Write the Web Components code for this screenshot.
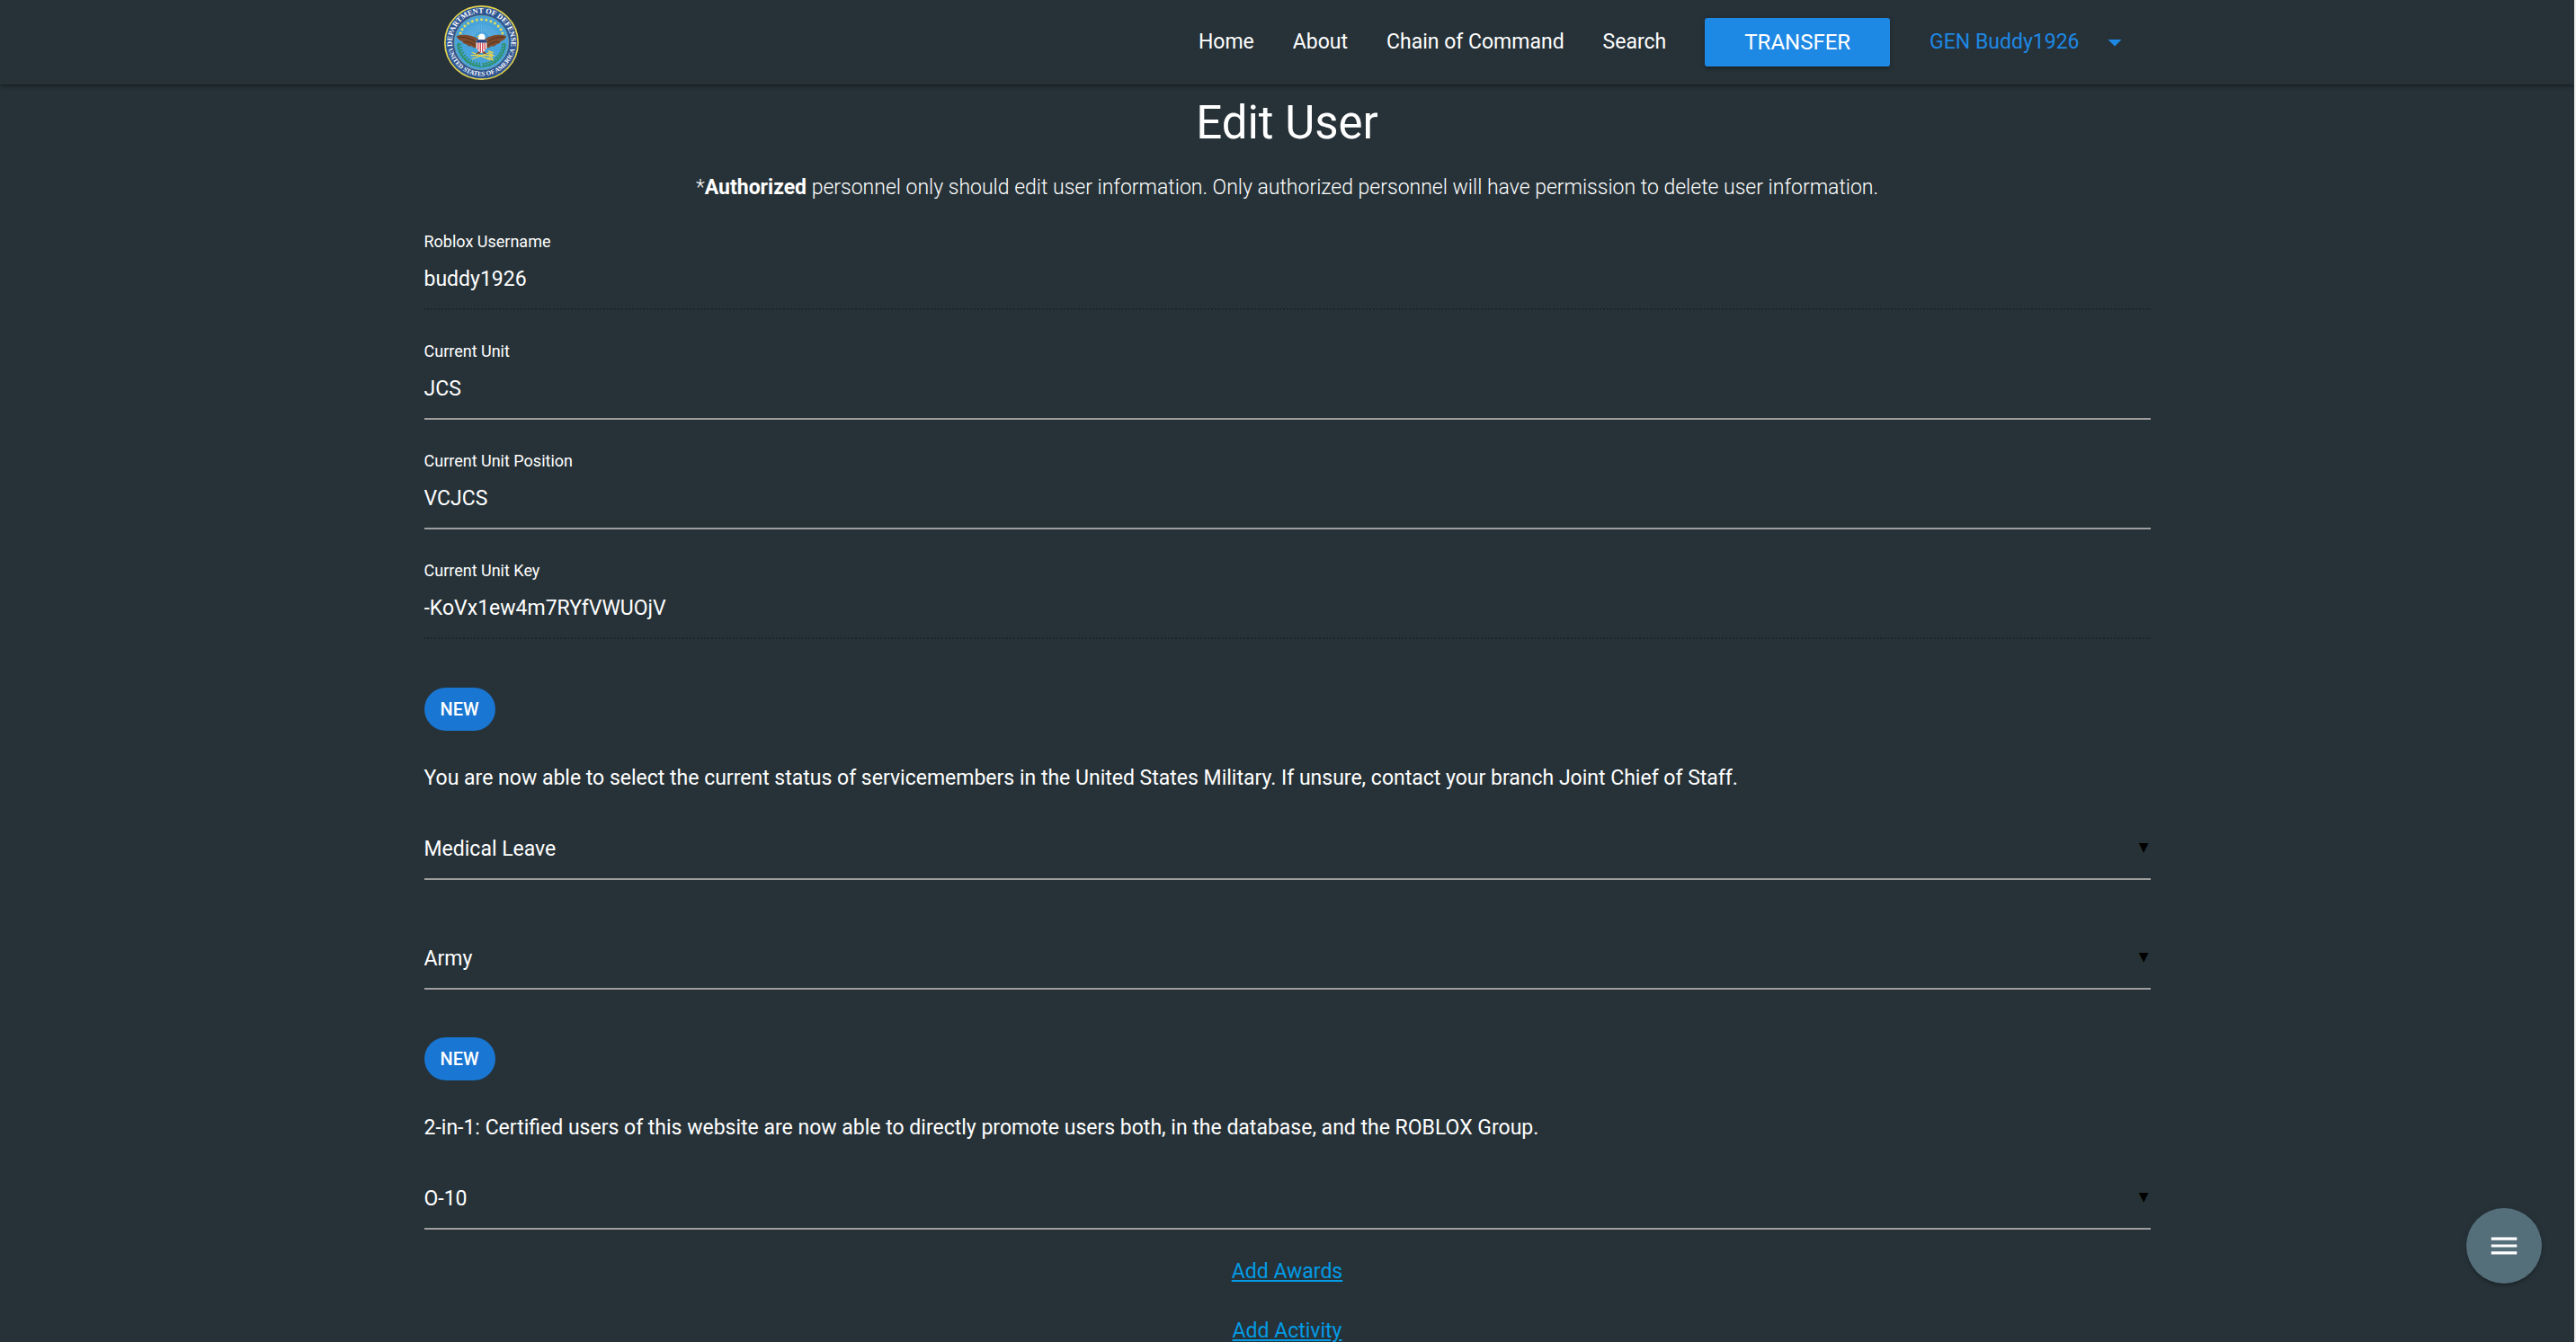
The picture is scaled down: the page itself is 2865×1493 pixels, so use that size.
<!DOCTYPE html>
<html lang="en">
<head>
<meta charset="utf-8">
<title>Edit User</title>
<style>
html, body { margin: 0; height: 100%; background: #263238; }
body {
  --bg: #263238; --blue: #1e88e5; --badge: #1976d2; --link: #039be5; --line: #9e9e9e;
  --text: 23px; --leading: 34px;
  font: 400 var(--text)/var(--leading) Roboto, "Open Sans", sans-serif; color: #fff;
}
b { font-weight: 700; }
</style>
</head>
<body>
<app-shell>
  <site-nav slot="nav">
    <defense-seal slot="brand"></defense-seal>
    <nav-link href="#home">Home</nav-link>
    <nav-link href="#about">About</nav-link>
    <nav-link href="#chain">Chain of Command</nav-link>
    <nav-link href="#search">Search</nav-link>
    <nav-button>TRANSFER</nav-button>
    <user-menu>GEN Buddy1926</user-menu>
  </site-nav>
  <page-heading>
    Edit User
    <span slot="note">*<b>Authorized</b> personnel only should edit user information. Only authorized personnel will have permission to delete user information.</span>
  </page-heading>
  <field-group>
    <text-field label="Roblox Username" value="buddy1926" disabled></text-field>
    <text-field label="Current Unit" value="JCS"></text-field>
    <text-field label="Current Unit Position" value="VCJCS"></text-field>
    <text-field label="Current Unit Key" value="-KoVx1ew4m7RYfVWUOjV" disabled></text-field>
  </field-group>
  <feature-note>You are now able to select the current status of servicemembers in the United States Military. If unsure, contact your branch Joint Chief of Staff.</feature-note>
  <select-group>
    <select-field label="Status" options="Medical Leave|Active Duty|Reserve|Retired"></select-field>
    <select-field label="Branch" options="Army|Navy|Air Force|Marine Corps"></select-field>
  </select-group>
  <feature-note>2-in-1: Certified users of this website are now able to directly promote users both, in the database, and the ROBLOX Group.</feature-note>
  <select-group>
    <select-field label="Rank" options="O-10|O-9|O-8|O-7"></select-field>
  </select-group>
  <link-list>
    <action-link href="#awards">Add Awards</action-link>
    <action-link href="#activity">Add Activity</action-link>
  </link-list>
  <floating-menu slot="fab"></floating-menu>
</app-shell>

<script>
const define = (name, render) => customElements.define(name, class extends HTMLElement {
  connectedCallback() {
    if (this.shadowRoot) return;
    this.attachShadow({ mode: 'open' }).innerHTML = render(this);
  }
});

define('app-shell', () => `
<style>
:host { display: flex; flex-direction: column; box-sizing: border-box; height: 100vh; overflow-y: auto; scrollbar-width: none; background: var(--bg); border-right: 2px solid #f1f1f1; }
main { width: 70%; max-width: 1920px; margin: 0 auto; flex: none; }
</style>
<slot name="nav"></slot>
<main><slot></slot></main>
<slot name="fab"></slot>`);

define('site-nav', () => `
<style>
:host { display: block; flex: none; background: var(--bg); box-shadow: 0 3px 3px rgba(0,0,0,.14), 0 1px 7px rgba(0,0,0,.12), 0 3px 1px -2px rgba(0,0,0,.2); }
nav { width: 70%; max-width: 1920px; height: 94px; margin: 0 auto; display: flex; align-items: center; justify-content: space-between; }
.brand { padding-left: 22px; display: flex; }
.links { display: flex; align-items: center; }
</style>
<nav><div class="brand"><slot name="brand"></slot></div><div class="links"><slot></slot></div></nav>`);

define('nav-link', el => `
<style>
:host { display: block; }
a { display: block; padding: 0 21px 0 22px; color: inherit; text-decoration: none; }
</style>
<a href="${el.getAttribute('href')}"><slot></slot></a>`);

define('nav-button', () => `
<style>
:host { display: block; padding: 0 22px; }
button { font: inherit; font-size: 24px; color: #fff; background: var(--blue); border: 0; border-radius: 3px; height: 54px; padding: 0 44px; margin: 0; display: block;
  box-shadow: 0 3px 3px rgba(0,0,0,.14), 0 1px 7px rgba(0,0,0,.12), 0 3px 1px -2px rgba(0,0,0,.2); }
</style>
<button type="button"><slot></slot></button>`);

define('user-menu', () => `
<style>
:host { display: block; }
button { font: inherit; color: var(--blue); background: none; border: 0; margin: 0; padding: 0 22px; display: flex; align-items: center; gap: 21px; }
svg { width: 36px; height: 36px; display: block; }
</style>
<button type="button" aria-haspopup="true"><slot></slot><svg viewBox="0 0 24 24" aria-hidden="true"><path d="M7 10l5 5 5-5z" fill="currentColor"/></svg></button>`);

define('defense-seal', () => {
  const stars = Array.from({ length: 13 }, (_, i) => {
    const a = (-166 + i * 12.7) * Math.PI / 180;
    const cx = 100 + 58 * Math.cos(a), cy = 86 + 48 * Math.sin(a);
    const p = Array.from({ length: 10 }, (_, k) => {
      const r = k % 2 ? 2.4 : 5.4, t = -Math.PI / 2 + k * Math.PI / 5;
      return `${(cx + r * Math.cos(t)).toFixed(1)},${(cy + r * Math.sin(t)).toFixed(1)}`;
    }).join(' ');
    return `<polygon points="${p}" fill="#f5e04a"/>`;
  }).join('');
  const rays = Array.from({ length: 19 }, (_, i) => {
    const a = (-171 + i * 9) * Math.PI / 180;
    return `<line x1="${(100 + 20 * Math.cos(a)).toFixed(1)}" y1="${(88 + 18 * Math.sin(a)).toFixed(1)}" x2="${(100 + 47 * Math.cos(a)).toFixed(1)}" y2="${(88 + 37 * Math.sin(a)).toFixed(1)}"/>`;
  }).join('');
  const leaves = Array.from({ length: 11 }, (_, i) => {
    const d = 5 + i * 8;
    return [d, 180 - d].map((g, s) => {
      const a = g * Math.PI / 180, x = 100 + 63 * Math.cos(a), y = 100 + 63 * Math.sin(a);
      const rot = g + 90 + (s ? 25 : -25);
      return `<ellipse cx="${x.toFixed(1)}" cy="${y.toFixed(1)}" rx="6" ry="2.6" transform="rotate(${rot} ${x.toFixed(1)} ${y.toFixed(1)})"/>
        <ellipse cx="${(x * .9 + 10).toFixed(1)}" cy="${(y * .9 + 10).toFixed(1)}" rx="4" ry="2" transform="rotate(${rot + 50} ${(x * .9 + 10).toFixed(1)} ${(y * .9 + 10).toFixed(1)})"/>`;
    }).join('');
  }).join('');
  return `
<style>
:host { display: block; }
svg { display: block; width: 83px; height: 83px; }
text { font: 700 20px "Liberation Serif", serif; fill: #fff; }
.small { font-size: 17px; }
</style>
<svg viewBox="0 0 200 200" role="img" aria-label="Seal">
<defs><path id="top" d="M22 112 A79 79 0 1 1 178 112"/><path id="bottom" d="M10 108 A90.500 90.500 0 0 0 190 108"/></defs>
<circle cx="100" cy="100" r="98" fill="#2e5591" stroke="#e3d34e" stroke-width="4"/>
<circle cx="100" cy="100" r="73" fill="#47a3dc" stroke="#a9b56e" stroke-width="1"/>
<g stroke="#8cc6e6" stroke-width="1">${rays}</g>
${stars}
<g fill="#2f8f63">${leaves}</g>
<g stroke="#e8d44d" stroke-width="3" fill="none"><path d="M72 134 L126 134 M74 144 L124 126 M74 126 L124 146"/><path d="M118 122 l12 4 -8 8 M120 130 l12 4 -12 5 M116 140 l14 6 -4 -12"/></g>
<path d="M90 90 C74 78 52 76 33 82 C36 92 44 94 48 96 C49 102 55 104 60 104 C63 110 70 110 74 109 C78 115 86 115 92 112 L92 124 L84 132 L100 128 L116 132 L108 124 L108 112 C114 115 122 115 126 109 C130 110 137 110 140 104 C145 104 151 102 152 96 C156 94 164 92 167 82 C148 76 126 78 110 90 Z" fill="#7d4b2d"/>
<path d="M38 85 C55 84 72 88 86 100 M162 85 C145 84 128 88 114 100 M54 97 C66 97 76 102 84 108 M146 97 C134 97 124 102 116 108" stroke="#4a2b1b" stroke-width="2" fill="none"/>
<path d="M92 92 C89 80 95 76 102 76 C109 77 111 83 109 92 Z" fill="#fff"/><path d="M94 80 L86 84 L94 85Z" fill="#f0cf42"/>
<path d="M86 92 H114 V112 Q112 121 100 128 Q88 121 86 112Z" fill="#fff"/>
<path d="M91 100V119M97 100V125M103 100V125M109 100V119" stroke="#cf3947" stroke-width="3"/>
<path d="M86 92H114V100H86Z" fill="#28437f"/>
<text><textPath href="#top" startOffset="50%" text-anchor="middle">DEPARTMENT OF DEFENSE</textPath></text>
<text class="small"><textPath href="#bottom" startOffset="50%" text-anchor="middle">UNITED STATES OF AMERICA</textPath></text>
</svg>`;
});

define('page-heading', () => `
<style>
:host { display: block; text-align: center; padding: 15px 0 33px; }
h1 { font-size: 51px; line-height: 56px; font-weight: 400; margin: 0 0 27px; }
p { margin: 0; font-weight: 300; }
</style>
<h1><slot></slot></h1><p><slot name="note"></slot></p>`);

define('field-group', () => `
<style>:host { display: flex; flex-direction: column; gap: 36px; padding-bottom: 54px; }</style><slot></slot>`);

define('select-group', () => `
<style>:host { display: flex; flex-direction: column; gap: 56px; padding-bottom: 53px; }
:host(:last-of-type) { padding-bottom: 30px; }</style><slot></slot>`);

define('text-field', el => `
<style>
:host { display: flex; flex-direction: column; }
label { font-size: 18px; line-height: 20px; }
input { font: inherit; color: #fff; -webkit-text-fill-color: #fff; opacity: 1; background: none; box-sizing: border-box; width: 100%; height: 66px; margin: 0; padding: 0 0 1px; border: 0; border-bottom: 2px solid var(--line); border-radius: 0; outline: 0; }
input:disabled { border-bottom: 2px dotted rgba(0,0,0,.26); }
</style>
<label for="i">${el.getAttribute('label')}</label>
<input id="i" type="text" value="${el.getAttribute('value')}" ${el.hasAttribute('disabled') ? 'disabled' : ''}>`);

define('select-field', el => `
<style>
:host { display: grid; align-items: center; border-bottom: 2px solid var(--line); }
select { grid-area: 1 / 1; appearance: none; font: inherit; color: #fff; background: none; width: 100%; height: 64px; margin: 0; padding: 0 0 1px; border: 0; border-radius: 0; outline: 0; }
option { color: #263238; }
.caret { grid-area: 1 / 1; justify-self: end; padding: 0 2px 5px 0; font: 14px/15px "DejaVu Sans", sans-serif; color: #000; pointer-events: none; }
</style>
<select aria-label="${el.getAttribute('label')}">${el.getAttribute('options').split('|').map(o => `<option>${o}</option>`).join('')}</select>
<span class="caret" aria-hidden="true">▼</span>`);

define('feature-note', () => `
<style>
:host { display: flex; flex-direction: column; align-items: flex-start; gap: 36px; padding-bottom: 30px; }
.badge { background: var(--badge); border-radius: 24px; font-size: 20px; font-weight: 500; line-height: 48px; padding: 0 18px; }
p { margin: 0; }
</style>
<span class="badge">NEW</span><p><slot></slot></p>`);

define('link-list', () => `
<style>:host { display: flex; flex-direction: column; align-items: center; gap: 32px; }</style><slot></slot>`);

define('action-link', el => `
<style>:host { display: block; } a { color: var(--link); text-decoration: underline; }</style>
<a href="${el.getAttribute('href')}"><slot></slot></a>`);

define('floating-menu', () => `
<style>
:host { display: block; position: fixed; right: 38px; bottom: 65px; }
button { display: grid; place-items: center; width: 84px; height: 84px; border: 0; border-radius: 50%; padding: 0; margin: 0; background: #546e7a; color: #fff;
  box-shadow: 0 3px 3px rgba(0,0,0,.14), 0 1px 7px rgba(0,0,0,.12), 0 3px 1px -2px rgba(0,0,0,.2); }
svg { width: 38px; height: 38px; display: block; }
</style>
<button type="button" aria-label="Menu"><svg viewBox="0 0 24 24"><path d="M3 18h18v-2H3v2zm0-5h18v-2H3v2zm0-7v2h18V6H3z" fill="currentColor"/></svg></button>`);
</script>
</body>
</html>
